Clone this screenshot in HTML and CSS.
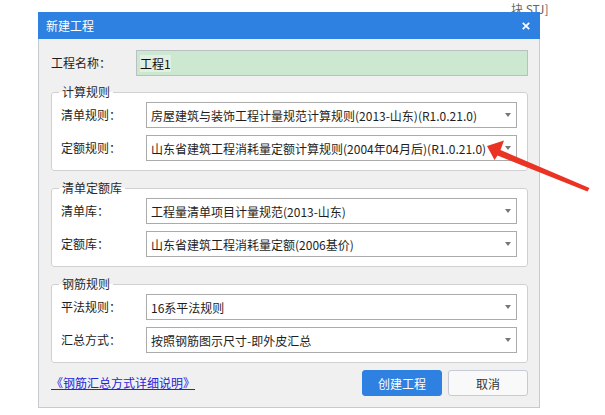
FILE: index.html
```html
<!DOCTYPE html>
<html lang="zh">
<head>
<meta charset="utf-8">
<title>新建工程</title>
<link rel="stylesheet" href="styles.css">
</head>
<body>
<div class="bgtext">块 STJ]</div>
<div class="dialog">
  <div class="titlebar">
    <span class="title">新建工程</span>
    <svg class="close" width="8" height="8" viewBox="0 0 8 8"><path d="M0.8 0.8 L7.2 7.2 M7.2 0.8 L0.8 7.2" stroke="#fff" stroke-width="1.7" fill="none"/></svg>
  </div>
  <div class="body">
    <div class="row">
      <span class="label name-label">工程名称：</span>
      <div class="name-input"><span class="sel">工程1</span></div>
    </div>

    <fieldset class="group">
      <legend>计算规则</legend>
      <div class="rows">
        <div class="row"><span class="label">清单规则：</span><div class="select"><span>房屋建筑与装饰工程计量规范计算规则(2013-山东)(R1.0.21.0)</span><i class="caret"></i></div></div>
        <div class="row"><span class="label">定额规则：</span><div class="select"><span>山东省建筑工程消耗量定额计算规则(2004年04月后)(R1.0.21.0)</span><i class="caret"></i></div></div>
      </div>
    </fieldset>

    <fieldset class="group">
      <legend>清单定额库</legend>
      <div class="rows">
        <div class="row"><span class="label">清单库：</span><div class="select"><span>工程量清单项目计量规范(2013-山东)</span><i class="caret"></i></div></div>
        <div class="row"><span class="label">定额库：</span><div class="select"><span>山东省建筑工程消耗量定额(2006基价)</span><i class="caret"></i></div></div>
      </div>
    </fieldset>

    <fieldset class="group">
      <legend>钢筋规则</legend>
      <div class="rows">
        <div class="row"><span class="label">平法规则：</span><div class="select"><span>16系平法规则</span><i class="caret"></i></div></div>
        <div class="row"><span class="label">汇总方式：</span><div class="select"><span>按照钢筋图示尺寸-即外皮汇总</span><i class="caret"></i></div></div>
      </div>
    </fieldset>

    <div class="footer">
      <a class="link" href="#">《钢筋汇总方式详细说明》</a>
      <div class="buttons">
        <button class="btn primary">创建工程</button>
        <button class="btn">取消</button>
      </div>
    </div>
  </div>
</div>
<svg class="arrow" width="605" height="415" viewBox="0 0 605 415">
  <polygon points="487,146 504,140.5 500.5,150 589.5,188 587.5,191.5 497.5,155.5 494.5,160" fill="#ea3323"/>
</svg>
</body>
</html>
```
FILE: styles.css
```css
* { box-sizing: border-box; }
html, body {
  margin: 0;
  padding: 0;
  background: #ffffff;
  width: 605px;
  height: 415px;
  overflow: hidden;
  font-family: "Noto Sans CJK SC", "Noto Sans", sans-serif;
  font-size: 12px;
  color: #1e1e1e;
}
.bgtext {
  position: absolute;
  left: 511px;
  top: 1px;
  font-size: 12px;
  color: #666;
  line-height: 16px;
}
.dialog {
  position: absolute;
  left: 38px;
  top: 12px;
  width: 502px;
  height: 396px;
  display: flex;
  flex-direction: column;
}
.titlebar {
  height: 27px;
  background: #2e80e1;
  display: flex;
  align-items: center;
  justify-content: space-between;
  padding: 0 10px 0 8px;
  flex: none;
}
.title {
  color: #fff;
  font-size: 12px;
  line-height: 16px;
}
.close { display: block; }
.body {
  flex: 1;
  background: #f0f0f0;
  border: 1px solid #c5cad3;
  border-top: 0;
  padding: 11px 11px 11px 12px;
  display: flex;
  flex-direction: column;
}
.row {
  display: flex;
  align-items: center;
}
.label {
  width: 85px;
  flex: none;
  line-height: 16px;
  color: #1e1e1e;
}
.name-input {
  flex: 1;
  height: 26px;
  background: #cde8d1;
  border: 1px solid #b9c0c4;
  padding: 0 3px;
  display: flex;
  align-items: center;
}
.name-input .sel {
  background: #e2efe2;
  line-height: 17px;
  color: #111;
}
.group {
  margin: 8px 0 0 0;
  padding: 2px 10px 9px 9px;
  border: 1px solid #d0d0d0;
  border-radius: 3px;
  background: #fff;
  min-inline-size: 0;
}
.group + .group { margin-top: 9px; }
.group legend {
  padding: 0 3px;
  margin-left: -2px;
  line-height: 16px;
  color: #2a2a2a;
  background: transparent;
}
.rows {
  display: flex;
  flex-direction: column;
  gap: 7px;
}
.select {
  flex: 1;
  height: 26px;
  background: #fff;
  border: 1px solid #ababab;
  padding: 0 4px;
  display: flex;
  align-items: center;
  justify-content: space-between;
  white-space: nowrap;
  overflow: hidden;
  color: #1e1e1e;
}
.caret {
  flex: none;
  width: 0;
  height: 0;
  border-left: 3.5px solid transparent;
  border-right: 3.5px solid transparent;
  border-top: 4px solid #777;
  margin-right: 1px;
}
.footer {
  margin-top: 7px;
  display: flex;
  align-items: center;
  justify-content: space-between;
}
.link {
  color: #2323e0;
  text-decoration: underline;
  line-height: 16px;
}
.buttons {
  display: flex;
  gap: 6px;
}
.btn {
  width: 80px;
  height: 26px;
  border: 1px solid #c5cad6;
  border-radius: 3px;
  background: #f9f9f9;
  color: #333;
  font-family: inherit;
  font-size: 12px;
  padding: 0;
  cursor: pointer;
}
.btn.primary {
  background: #2e80e1;
  border-color: #2e80e1;
  color: #fff;
}
.arrow {
  position: absolute;
  left: 0;
  top: 0;
  pointer-events: none;
}
```
